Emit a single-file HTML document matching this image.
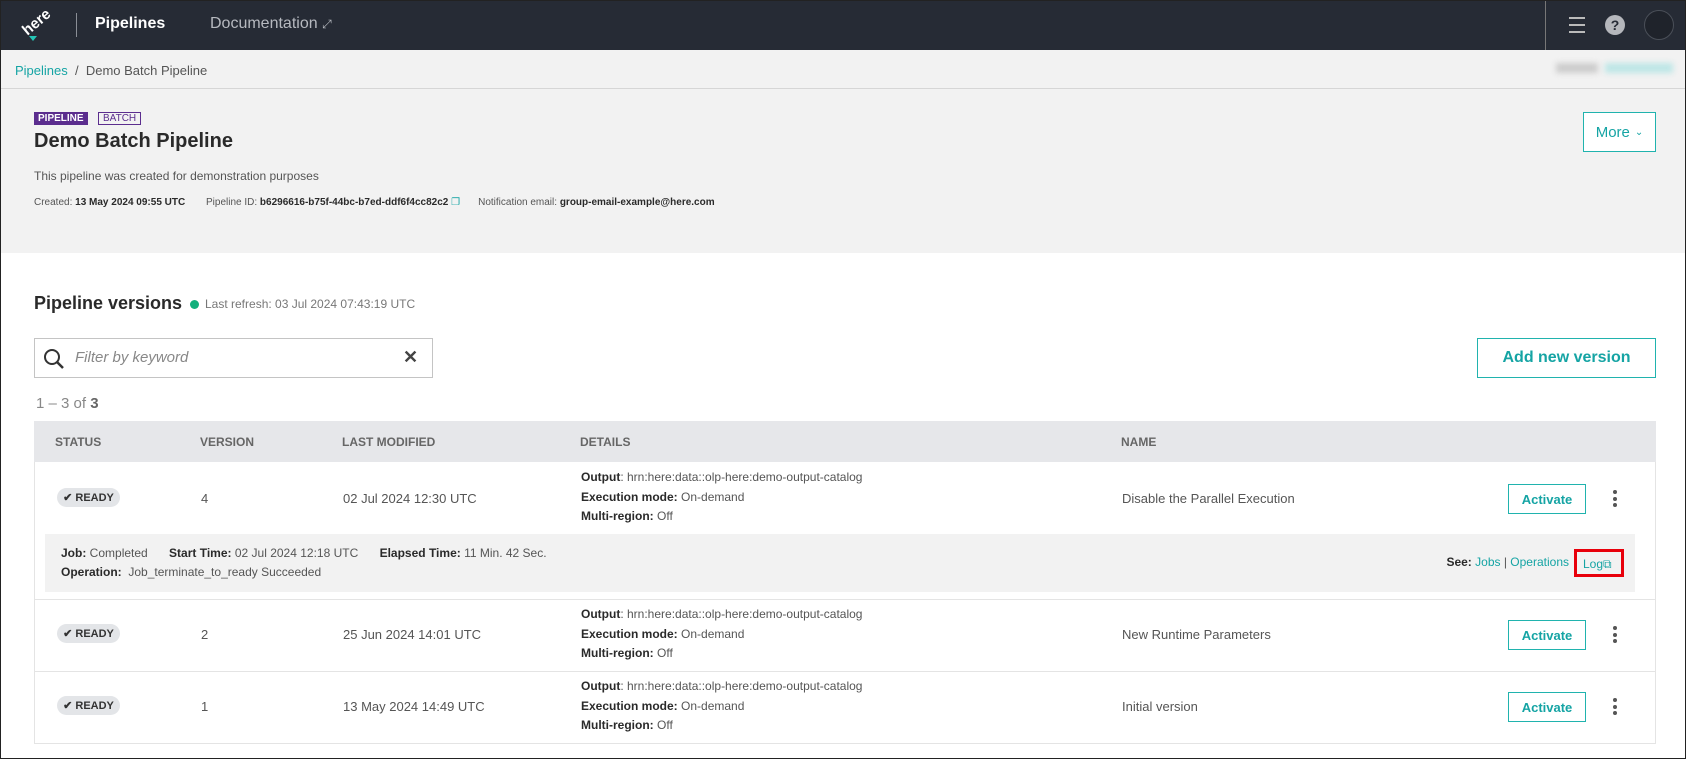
<!DOCTYPE html>
<html><head><meta charset="utf-8"><style>
*{box-sizing:border-box;margin:0;padding:0}
body{width:1686px;height:759px;overflow:hidden;background:#fff;font-family:"Liberation Sans",sans-serif;color:#555;position:relative;font-size:13px}
.a{position:absolute;white-space:nowrap}
.frame{position:absolute;inset:0;border:1px solid #222;pointer-events:none;z-index:10}
.nav{position:absolute;left:0;top:0;width:1686px;height:50px;background:#262b35}
.bc{position:absolute;left:0;top:50px;width:1686px;height:39px;background:#f2f2f2;border-bottom:1px solid #d6d6d6}
.hdr{position:absolute;left:0;top:89px;width:1686px;height:164px;background:#f2f2f2}
.teal{color:#15a4a4}
b{color:#2a2a2a}
.btn{position:absolute;border:1px solid #20b3ae;color:#15a4a4;font-weight:bold;display:flex;align-items:center;justify-content:center;background:#fff}
.th{position:absolute;top:421px;height:41px;left:34px;width:1622px;background:#e6e7ea}
.th span{position:absolute;top:14px;font-size:12px;font-weight:bold;color:#666}
.row{position:absolute;left:34px;width:1622px;border-left:1px solid #e4e4e4;border-right:1px solid #e4e4e4;border-bottom:1px solid #e4e4e4}
.pill{position:absolute;left:22px;width:63px;height:19px;border-radius:10px;background:#e3e5e8;color:#333;font-size:11px;font-weight:bold;display:flex;align-items:center;justify-content:center}
.det{position:absolute;left:546px;font-size:12px;line-height:19.5px}
.kb{position:absolute;left:1578px;width:4px}
.kb i{display:block;width:4px;height:4px;border-radius:2px;background:#555;margin-bottom:2.5px}
</style></head><body>
<div class="nav">
  <div class="a" style="left:30px;top:22px;color:#fff;font-weight:bold;font-size:15px;transform:rotate(-40deg);transform-origin:left bottom">here</div>
  <div class="a" style="left:29px;top:36px;width:0;height:0;border-left:4px solid transparent;border-right:4px solid transparent;border-top:5px solid #25c5b5"></div>
  <div class="a" style="left:76px;top:13px;width:1px;height:24px;background:#8a8e96"></div>
  <div class="a" style="left:95px;top:15px;color:#fff;font-weight:bold;font-size:16px">Pipelines</div>
  <div class="a" style="left:210px;top:15px;color:#b6b9bf;font-size:16px">Documentation <span style="font-size:12px">⤢</span></div>
  <div class="a" style="left:1545px;top:0;width:1px;height:50px;background:#777"></div>
  <div class="a" style="left:1569px;top:17px;width:16px"><div style="height:2px;background:#bbb;margin-bottom:5px"></div><div style="height:2px;background:#bbb;margin-bottom:5px"></div><div style="height:2px;background:#bbb"></div></div>
  <div class="a" style="left:1605px;top:15px;width:20px;height:20px;border-radius:10px;background:#b5b7bc;color:#262b35;font-weight:bold;font-size:14px;text-align:center;line-height:20px">?</div>
  <div class="a" style="left:1644px;top:10px;width:30px;height:30px;border-radius:15px;border:1px solid #4a4f58;background:#1f232b"></div>
</div>
<div class="bc">
  <div class="a" style="left:15px;top:13px;font-size:13px"><span class="teal">Pipelines</span> &nbsp;/&nbsp; Demo Batch Pipeline</div>
  <div class="a" style="left:1605px;top:13px;width:68px;height:10px;background:#bde6e6;filter:blur(3px)"></div>
  <div class="a" style="left:1556px;top:13px;width:42px;height:10px;background:#ccc;filter:blur(3px)"></div>
</div>
<div class="hdr">
  <div class="a" style="left:34px;top:23px;height:13px;padding:0 4px;background:#5b2d8e;color:#fff;font-size:10px;font-weight:bold;line-height:13px">PIPELINE</div>
  <div class="a" style="left:98px;top:23px;height:13px;padding:0 4px;border:1px solid #5b2d8e;color:#5b2d8e;font-size:10px;line-height:11px">BATCH</div>
  <div class="a" style="left:34px;top:41px;font-size:20px;font-weight:bold;color:#2a2a2a">Demo Batch Pipeline</div>
  <div class="a" style="left:34px;top:80px;font-size:12px">This pipeline was created for demonstration purposes</div>
  <div class="a" style="left:34px;top:108px;font-size:10px">Created: <b>13 May 2024 09:55 UTC</b> <span style="display:inline-block;width:18px"></span>Pipeline ID: <b>b6296616-b75f-44bc-b7ed-ddf6f4cc82c2</b> <span class="teal">❐</span><span style="display:inline-block;width:18px"></span>Notification email: <b>group-email-example@here.com</b></div>
</div>
<div class="btn" style="left:1583px;top:112px;width:73px;height:40px;font-weight:normal;font-size:15px">More <span style="font-size:10px;margin-left:5px">⌄</span></div>

<div class="a" style="left:34px;top:293px;font-size:18px;font-weight:bold;color:#2a2a2a">Pipeline versions</div>
<div class="a" style="left:190px;top:300px;width:9px;height:9px;border-radius:5px;background:#13b07c"></div>
<div class="a" style="left:205px;top:297px;font-size:12px;color:#777">Last refresh: 03 Jul 2024 07:43:19 UTC</div>

<div class="a" style="left:34px;top:338px;width:399px;height:40px;border:1px solid #c4c4c4;background:#fff">
  <svg class="a" style="left:8px;top:9px" width="22" height="22" viewBox="0 0 22 22"><circle cx="9" cy="9" r="7" fill="none" stroke="#333" stroke-width="2"/><path d="M14 14l6 6" stroke="#333" stroke-width="2.5"/></svg>
  <div class="a" style="left:40px;top:10px;font-size:15px;font-style:italic;color:#888">Filter by keyword</div>
  <div class="a" style="left:368px;top:8px;font-size:18px;font-weight:bold;color:#444">✕</div>
</div>
<div class="btn" style="left:1477px;top:338px;width:179px;height:40px;font-size:16px">Add new version</div>
<div class="a" style="left:36px;top:395px;font-size:15px;color:#888">1 – 3 of <b style="color:#666">3</b></div>

<div class="th"><span style="left:21px">STATUS</span><span style="left:166px">VERSION</span><span style="left:308px">LAST MODIFIED</span><span style="left:546px">DETAILS</span><span style="left:1087px">NAME</span></div>

<div class="row" style="top:462px;height:138px">
  <div class="pill" style="top:26px">✔ READY</div>
  <div class="a" style="left:166px;top:29px">4</div>
  <div class="a" style="left:308px;top:29px">02 Jul 2024 12:30 UTC</div>
  <div class="det" style="top:6px"><b>Output</b>: hrn:here:data::olp-here:demo-output-catalog<br><b>Execution mode:</b> On-demand<br><b>Multi-region:</b> Off</div>
  <div class="a" style="left:1087px;top:29px">Disable the Parallel Execution</div>
  <div class="btn" style="left:1473px;top:22px;width:78px;height:30px;font-size:13px">Activate</div>
  <div class="kb" style="top:28px"><i></i><i></i><i></i></div>
  <div class="a" style="left:10px;top:72px;width:1590px;height:58px;background:#f2f2f2">
    <div class="a" style="left:16px;top:12px;font-size:12px"><b>Job:</b> Completed <span style="display:inline-block;width:18px"></span><b>Start Time:</b> 02 Jul 2024 12:18 UTC <span style="display:inline-block;width:18px"></span><b>Elapsed Time:</b> 11 Min. 42 Sec.</div>
    <div class="a" style="left:16px;top:31px;font-size:12px"><b>Operation:</b>&nbsp; Job_terminate_to_ready Succeeded</div>
    <div class="a" style="right:66px;top:21px;font-size:12px"><b>See:</b> <span class="teal">Jobs</span> | <span class="teal">Operations</span></div>
    <div class="a" style="left:1529px;top:15px;width:50px;height:28px;border:3px solid #e8000b;font-size:12px;padding:5px 0 0 6px"><span class="teal">Log⧉</span></div>
  </div>
</div>
<div class="row" style="top:600px;height:72px">
  <div class="pill" style="top:24px">✔ READY</div>
  <div class="a" style="left:166px;top:27px">2</div>
  <div class="a" style="left:308px;top:27px">25 Jun 2024 14:01 UTC</div>
  <div class="det" style="top:5px"><b>Output</b>: hrn:here:data::olp-here:demo-output-catalog<br><b>Execution mode:</b> On-demand<br><b>Multi-region:</b> Off</div>
  <div class="a" style="left:1087px;top:27px">New Runtime Parameters</div>
  <div class="btn" style="left:1473px;top:20px;width:78px;height:30px;font-size:13px">Activate</div>
  <div class="kb" style="top:26px"><i></i><i></i><i></i></div>
</div>
<div class="row" style="top:672px;height:72px">
  <div class="pill" style="top:24px">✔ READY</div>
  <div class="a" style="left:166px;top:27px">1</div>
  <div class="a" style="left:308px;top:27px">13 May 2024 14:49 UTC</div>
  <div class="det" style="top:5px"><b>Output</b>: hrn:here:data::olp-here:demo-output-catalog<br><b>Execution mode:</b> On-demand<br><b>Multi-region:</b> Off</div>
  <div class="a" style="left:1087px;top:27px">Initial version</div>
  <div class="btn" style="left:1473px;top:20px;width:78px;height:30px;font-size:13px">Activate</div>
  <div class="kb" style="top:26px"><i></i><i></i><i></i></div>
</div>
<div class="frame"></div>
</body></html>
